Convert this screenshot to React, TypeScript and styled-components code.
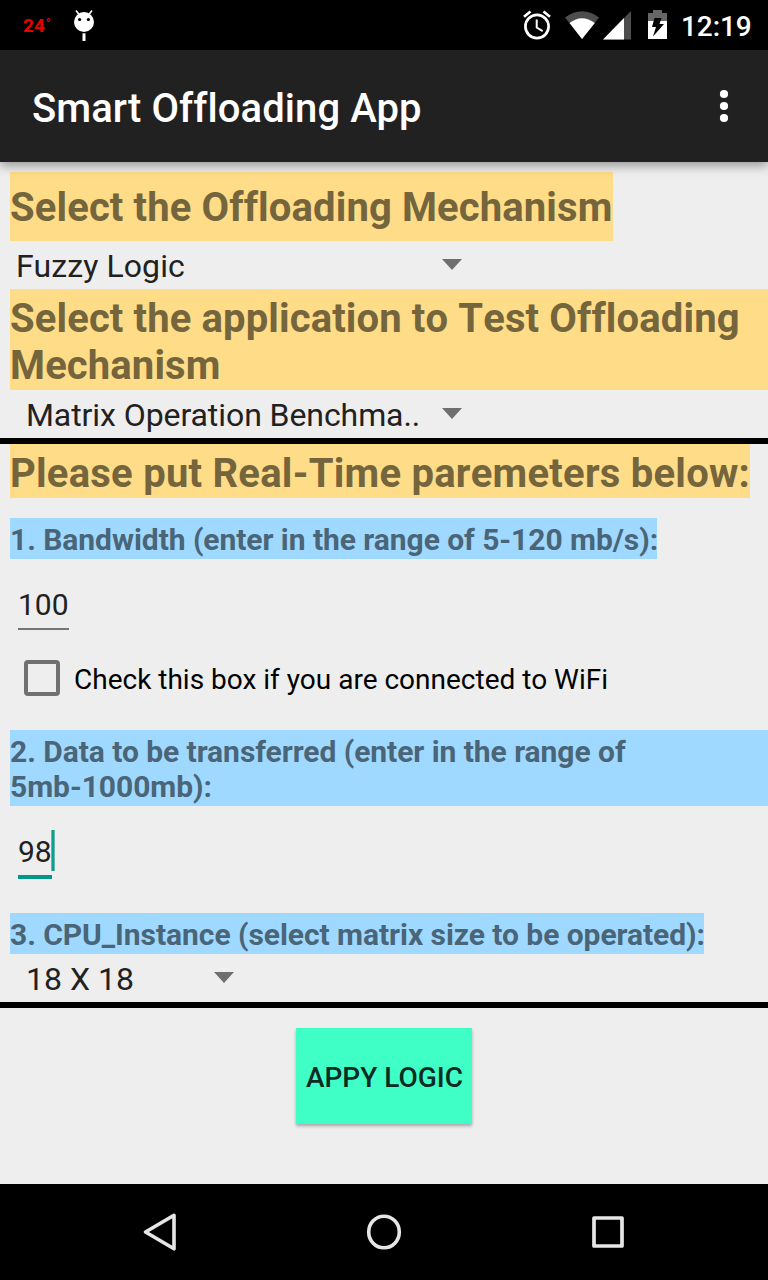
import React from "react";
import styled, { createGlobalStyle } from "styled-components";

const Global = createGlobalStyle`
  body { margin: 0; background: #eee; font-family: Roboto, sans-serif; font-variant-ligatures: none; }
  * { box-sizing: border-box; }
`;
const Screen = styled.div`
  width: 768px; height: 1280px; display: flex; flex-direction: column;
  background: #eeeeee; overflow: hidden;
`;
const StatusBar = styled.div`
  height: 50px; flex: none; background: #000; color: #fff; display: flex;
  align-items: center; padding: 0 17px 0 23px;
`;
const Temp = styled.span`
  color: #e60000; font-size: 19px; font-weight: 700; width: 49px; line-height: 50px;
  padding-top: 2px; display: flex; gap: 1px;
`;
const Degree = styled.span`
  font-size: 13px; line-height: 45px;
`;
const StatusIcons = styled.div`
  margin-left: auto; display: flex; align-items: center;
`;
const Clock = styled.span`
  font-size: 28px; font-weight: 500; line-height: 50px; width: 70px; margin-left: 12px; padding-top: 3px;
  white-space: nowrap; letter-spacing: -0.1px;
`;
const AppBar = styled.header`
  position: relative; z-index: 1;
  height: 112px; flex: none; background: #212121; color: #fff; display: flex;
  align-items: center; justify-content: space-between; padding: 0 38px 0 32px;
  box-shadow: 0 4px 10px rgba(0,0,0,.36);
`;
const Title = styled.h1`
  margin: 0; padding-top: 6px; font-size: 40px; font-weight: 500; line-height: 48px; white-space: nowrap;
  letter-spacing: 0.08px;
`;
const Content = styled.main`
  flex: 1; padding-top: 10px; display: flex; flex-direction: column; align-items: flex-start;
`;
const Heading = styled.h2<{ $h: number; $w?: number; $top?: number; $track: number }>`
  margin: 0 0 0 10px; width: ${p => (p.$w ? `${p.$w}px` : "758px")}; height: ${p => p.$h}px;
  padding-top: ${p => p.$top ?? 0}px; font-kerning: none; letter-spacing: ${p => p.$track}px;
  background: #ffdc87; color: #75653d; font-size: 40px; font-weight: 700; line-height: 47px; white-space: nowrap;
`;
const Label = styled.h3<{ $h: number; $w?: number; $gap: number }>`
  margin: ${p => p.$gap}px 0 0 10px; width: ${p => (p.$w ? `${p.$w}px` : "758px")}; height: ${p => p.$h}px;
  padding-top: 4px; letter-spacing: -0.05px;
  background: #a0d9ff; color: #4a6577; font-size: 30px; font-weight: 700; line-height: 35px; white-space: nowrap;
`;
const Spinner = styled.div<{ $w: number; $left: number; $track?: number }>`
  width: ${p => p.$w}px; height: 48px; padding: 2px 0 0 ${p => p.$left}px; display: flex; align-items: center;
  justify-content: space-between; font-size: 32px; color: #212121; white-space: nowrap;
  letter-spacing: ${p => p.$track ?? 0}px;
`;
const Arrow = styled.i`
  width: 0; height: 0; border: 10px solid transparent; border-top: 11px solid #6f6f6f; border-bottom: 0; margin-bottom: 3px;
`;
const Divider = styled.div`
  width: 768px; height: 6px; background: #000; flex: none;
`;
const Field = styled.div<{ $gap: number; $w: number; $active?: boolean }>`
  margin: ${p => p.$gap}px 0 0 18px; width: ${p => p.$w}px; height: ${p => (p.$active ? 49 : 45)}px;
  border-bottom: ${p => (p.$active ? "4px solid #009688" : "2px solid #757575")};
  font-size: 30px; line-height: ${p => (p.$active ? 43 : 39)}px; color: #212121; display: flex; white-space: nowrap;
`;
const Caret = styled.i`
  flex: none; width: 4px; height: 41px; margin-left: -1px;
  background: linear-gradient(90deg, #62b9b0 0 1px, #109c8f 1px 3px, #62b9b0 3px);
`;
const CheckRow = styled.label`
  margin: 30px 0 0 24px; height: 36px; display: flex; align-items: center; gap: 14px;
  font-size: 28px; color: #000; white-space: nowrap;
`;
const CheckText = styled.span`
  padding-top: 2px;
`;
const Box = styled.span`
  width: 36px; height: 36px; border: 4px solid #707070; border-radius: 4px;
`;
const Apply = styled.button`
  margin: 20px 0 0 296px; width: 176px; height: 96px; border: 0; padding: 3px 0 0 1px; background: #3fffc6;
  color: #0c2b22; font: 500 28px Roboto, sans-serif; white-space: nowrap;
  box-shadow: 0 2px 3px rgba(0,0,0,.3);
`;
const NavBar = styled.nav`
  height: 96px; flex: none; background: #000; display: flex; justify-content: center; gap: 128px; align-items: center;
`;

export default function App() {
  return (
    <Screen>
      <Global />
      <StatusBar>
        <Temp>24<Degree>°</Degree></Temp>
        <svg width="24" height="34" viewBox="72 8 24 34" fill="#fff">
          <path d="M76 10.500l3.500 4.500M92 10.500l-3.500 4.500" stroke="#fff" strokeWidth="1.600" />
          <circle cx="84" cy="22" r="10" /><path d="M82.500 33.300h3v7.700h-3z" />
          <circle cx="79.600" cy="19.500" r="1.600" fill="#000" /><circle cx="88.400" cy="19.500" r="1.600" fill="#000" />
        </svg>
        <StatusIcons>
          <svg width="147" height="34" viewBox="522 8 147 34" fill="none">
            <circle cx="537" cy="26.500" r="11.600" stroke="#fff" strokeWidth="2.700" />
            <path d="M536.700 19.500v8l6 3.700" stroke="#fff" strokeWidth="2" />
            <path d="M524 16.800l6.500-5.300M550 16.800l-6.500-5.300" stroke="#fff" strokeWidth="2.700" />
            <path d="M565 17.500Q582 5 599 17.500L582 39Z" fill="#4d4d4d" />
            <path d="M569.500 23Q582 13.500 594.800 23L582 39Z" fill="#fff" />
            <path d="M603 39.500L631 11V39.500Z" fill="#4d4d4d" /><path d="M603 39.500L624 18V39.500Z" fill="#fff" />
            <path d="M648 13h5v-3h9v3h5v9h-19z" fill="#666" /><path d="M648 21h19v18h-19z" fill="#fff" />
            <path d="M654.500 18h7l-2 6h4.500l-11 12.500 3-9.500h-4z" fill="#000" />
          </svg>
        </StatusIcons>
        <Clock>12:19</Clock>
      </StatusBar>
      <AppBar>
        <Title>Smart Offloading App</Title>
        <svg width="12" height="36" viewBox="0 0 12 36" fill="#fff"><circle cx="6" cy="6" r="4.100" /><circle cx="6" cy="18" r="4.100" /><circle cx="6" cy="30" r="4.100" /></svg>
      </AppBar>
      <Content>
        <Heading $h={69} $w={603} $top={12} $track={0.12}>Select the Offloading Mechanism</Heading>
        <Spinner $w={462} $left={16} $track={0.1}>Fuzzy Logic<Arrow /></Spinner>
        <Heading $h={101} $top={6} $track={0.12}>Select the application to Test Offloading<br />Mechanism</Heading>
        <Spinner $w={462} $left={26} $track={-0.08}>Matrix Operation Benchma..<Arrow /></Spinner>
        <Divider />
        <Heading $h={54} $w={740} $top={6} $track={0.24}>Please put Real-Time paremeters below:</Heading>
        <Label $gap={20} $h={41} $w={647}>1. Bandwidth (enter in the range of 5-120 mb/s):</Label>
        <Field $gap={26} $w={51}>100</Field>
        <CheckRow><Box /><CheckText>Check this box if you are connected to WiFi</CheckText></CheckRow>
        <Label $gap={34} $h={76}>2. Data to be transferred (enter in the range of<br />5mb-1000mb):</Label>
        <Field $gap={24} $w={34} $active>98<Caret /></Field>
        <Label $gap={34} $h={41} $w={694}>3. CPU_Instance (select matrix size to be operated):</Label>
        <Spinner $w={234} $left={26}>18 X 18<Arrow /></Spinner>
        <Divider />
        <Apply>APPY LOGIC</Apply>
      </Content>
      <NavBar>
        <svg width="96" height="96" viewBox="112 1184 96 96" fill="none" stroke="#e6e6e6" strokeWidth="3.600"><path d="M174 1215.200L145.500 1232L174 1248.800Z" strokeLinejoin="round" /></svg>
        <svg width="96" height="96" viewBox="336 1184 96 96" fill="none" stroke="#e6e6e6" strokeWidth="3.600"><ellipse cx="384" cy="1232" rx="15.300" ry="15.800" /></svg>
        <svg width="96" height="96" viewBox="560 1184 96 96" fill="none" stroke="#e6e6e6" strokeWidth="3.700"><rect x="594" y="1218" width="28" height="28" strokeLinejoin="round" /></svg>
      </NavBar>
    </Screen>
  );
}
